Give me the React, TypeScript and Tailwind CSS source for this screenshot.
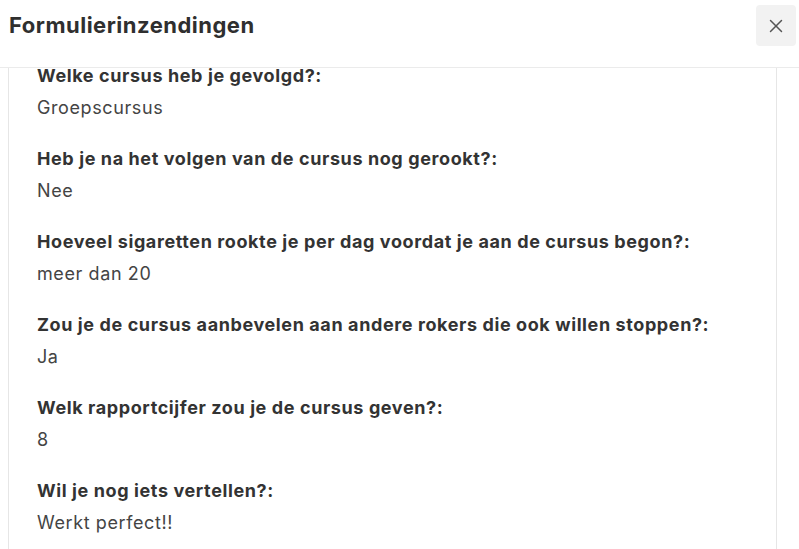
import { X } from "lucide-react";

const answers = [
  { q: "Welke cursus heb je gevolgd?:", a: "Groepscursus" },
  { q: "Heb je na het volgen van de cursus nog gerookt?:", a: "Nee" },
  { q: "Hoeveel sigaretten rookte je per dag voordat je aan de cursus begon?:", a: "meer dan 20" },
  { q: "Zou je de cursus aanbevelen aan andere rokers die ook willen stoppen?:", a: "Ja" },
  { q: "Welk rapportcijfer zou je de cursus geven?:", a: "8" },
  { q: "Wil je nog iets vertellen?:", a: "Werkt perfect!!" },
];

export default function App() {
  return (
    <div className="h-[549px] w-[799px] overflow-hidden bg-white text-[#333333] font-['Inter',sans-serif]">
      <div className="h-[68px] border-b border-[#ebebeb] pl-[9px] pr-[3px] pt-[5px]">
        <div className="flex h-[41px] items-center justify-between">
          <h1 className="text-[22px] font-bold tracking-[0.5px] text-[#2f2f2f]">Formulierinzendingen</h1>
          <button className="flex h-[41px] w-[40px] items-center justify-center rounded-[4px] bg-[#f2f2f2] text-[#555555]">
            <X size={22} strokeWidth={1.6} />
          </button>
        </div>
      </div>
      <div className="h-[481px] overflow-hidden">
        <div className="ml-[8px] mr-[22px] h-full border-x border-[#e6e6e6] pl-[28px]">
          <div className="flex flex-col">
            {answers.map((item) => (
              <div key={item.q} className="mb-[31px]">
                <div className="text-[18px] font-bold leading-[16px] tracking-[0.6px] text-[#333333]">{item.q}</div>
                <div className="mt-[12px] text-[18px] leading-[24px] tracking-[0.6px] text-[#444444]">{item.a}</div>
              </div>
            ))}
          </div>
        </div>
      </div>
    </div>
  );
}
